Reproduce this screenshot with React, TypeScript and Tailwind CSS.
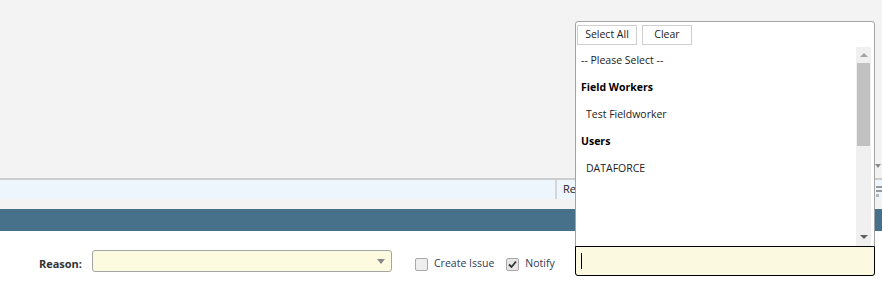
import React from 'react';

const font = { fontFamily: '"Open Sans", "Noto Sans", Arial, sans-serif' };

function MultiSelectPanel() {
  return (
    <div className="absolute left-[575px] top-[21px] w-[300px] rounded-[3px] border border-[#a3a3a3] bg-white">
      {/* buttons */}
      <div className="flex gap-[5px] px-[1px] pt-[3px]">
        <button className="h-[20px] w-[60px] border border-[#cfcfcf] bg-white text-[10.5px] text-[#222]">Select All</button>
        <button className="h-[20px] w-[50px] border border-[#cfcfcf] bg-white text-[10.5px] text-[#222]">Clear</button>
      </div>
      {/* list + scrollbar */}
      <div className="mt-[2px] flex h-[199px]">
        <div className="flex-1 pl-[5px] pt-[5px] text-[10.5px] text-[#222]">
          <div className="h-[27px] leading-[17px]">-- Please Select --</div>
          <div className="h-[27px] font-bold leading-[17px] text-black">Field Workers</div>
          <div className="h-[27px] pl-[5px] leading-[17px]">Test Fieldworker</div>
          <div className="h-[27px] font-bold leading-[17px] text-black">Users</div>
          <div className="h-[27px] pl-[5px] leading-[17px]">DATAFORCE</div>
        </div>
        <div className="mr-[3px] flex w-[15px] flex-col items-center bg-[#f0f0f0]">
          <div className="flex h-[16px] items-center justify-center">
            <div className="h-0 w-0 border-x-[4px] border-b-[4px] border-x-transparent border-b-[#a3a3a3]" />
          </div>
          <div className="h-[83px] w-[13px] bg-[#c1c1c1]" />
          <div className="flex-1" />
          <div className="flex h-[18px] items-center justify-center">
            <div className="h-0 w-0 border-x-[4px] border-t-[4px] border-x-transparent border-t-[#606060]" />
          </div>
        </div>
      </div>
      {/* search input */}
      <div className="-mx-[1px] -mb-[1px] flex h-[30px] items-center rounded-b-[3px] border border-black bg-[#fbf9df] pl-[5px]">
        <div className="h-[16px] w-[1px] bg-black" />
      </div>
    </div>
  );
}

export default function App() {
  return (
    <div className="relative h-[289px] w-[882px] overflow-hidden bg-white text-[12px]" style={font}>
      {/* upper grey area */}
      <div className="relative h-[178px] bg-[#f3f3f3]">
        <div className="absolute right-[1px] top-[164px] h-0 w-0 border-x-[3px] border-t-[4px] border-x-transparent border-t-[#8a8a8a]" />
      </div>
      <div className="h-[2px] bg-[#cdcdcd]" />
      {/* info strip */}
      <div className="flex h-[19px] bg-[#edf5fd]">
        <div className="flex-1" />
        <div className="w-[2px] bg-[#d6d6d6]" />
        <div className="flex w-[325px] items-center pl-[6px] text-[11px] text-[#222]">Re</div>
        <div className="absolute right-0 top-[186px] flex w-[6px] flex-col gap-[2px]">
          <div className="h-[2px] bg-[#9a9a9a]" />
          <div className="h-[2px] bg-[#9a9a9a]" />
          <div className="h-[3px] w-[3px] bg-[#b5b5b5]" />
        </div>
      </div>
      <div className="h-[10px] bg-[#f3f3f3]" />
      {/* header bar */}
      <div className="h-[22px] bg-[#47718a]" />
      {/* form row */}
      <div className="flex items-center pt-[19px]">
        <label className="mt-[6px] w-[82px] text-right text-[11px] font-bold text-[#333]">Reason:</label>
        <div className="ml-[10px] flex h-[22px] w-[300px] items-center justify-end rounded-[3px] border border-[#a5a5a5] bg-[#fcfadf] pr-[6px]">
          <div className="h-0 w-0 border-x-[4px] border-t-[5px] border-x-transparent border-t-[#888]" />
        </div>
        <div className="ml-[23px] mt-[6px] flex items-center">
          <span className="h-[13px] w-[13px] rounded-[2px] border border-[#a8a8a8] bg-[#eeeeee]" />
          <span className="ml-[6px] text-[10.5px] text-[#2f3a55]">Create Issue</span>
        </div>
        <div className="ml-[12px] mt-[6px] flex items-center">
          <span className="flex h-[13px] w-[13px] items-center justify-center rounded-[2px] border border-[#a8a8a8] bg-[#e6e6e6]">
            <svg width="9" height="9" viewBox="0 0 9 9">
              <path d="M1 4.5 L3.5 7 L8 1.5" fill="none" stroke="#333" strokeWidth="1.8" />
            </svg>
          </span>
          <span className="ml-[6px] text-[10.5px] text-[#2f3a55]">Notify</span>
        </div>
      </div>
      <MultiSelectPanel />
    </div>
  );
}
